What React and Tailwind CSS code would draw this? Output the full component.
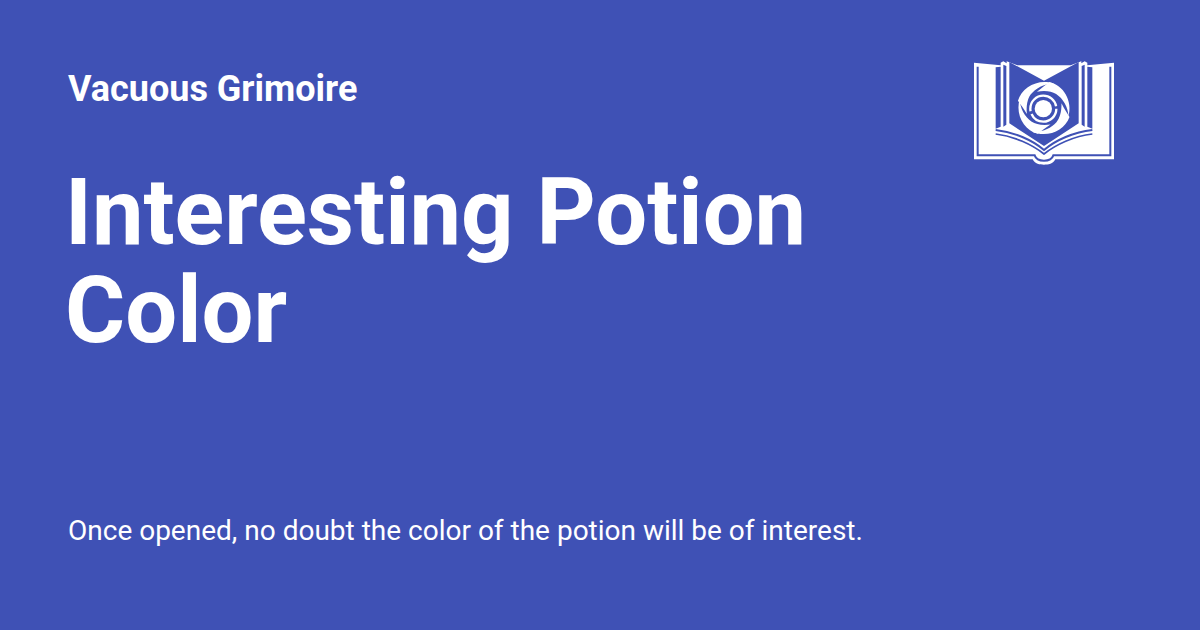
const blue = '#3f51b5'

// one swirl arm, drawn round the origin and turned into place
const Blade = ({ angle, scale = 1 }) => (
  <path
    fill="#fff"
    transform={`translate(240 168) rotate(${angle}) scale(${scale})`}
    d="M-4 -88 C44 -90 88 -46 86 8 C78 -22 54 -46 28 -55 C10 -60 -10 -58 -36 -47 C-22 -62 -14 -76 -4 -88 Z"
  />
)

const Logo = () => (
  <svg viewBox="0 0 480 360" className="w-[160px] h-[120px]">
    {/* book silhouette */}
    <path fill="#fff" d="M30 32 L110 40 L110 32 L118 28 L128 34 L128 28 L160 40 L320 40 L352 28 L352 34 L362 28 L370 32 L370 40 L450 32 L450 322 L274 322 C268 336 252 338 240 338 C228 338 212 336 206 322 L30 322 Z" />
    {/* inset line round the pages */}
    <path fill="none" stroke={blue} strokeWidth="6" d="M41 44 L41 310 L212 310 C216 322 230 326 240 326 C250 326 264 322 268 310 L439 310 L439 44" />
    {/* inner page strips */}
    <path fill={blue} d="M95 46 L110 44 L110 224 L95 230 Z M370 44 L385 46 L385 230 L370 224 Z" />
    <path fill={blue} d="M118 38 L127 42 L127 218 L118 224 Z M353 42 L362 38 L362 224 L353 218 Z" />
    {/* open centre of the book */}
    <path fill={blue} d="M136 30 L240 86 L344 30 L344 214 L240 282 L136 214 Z" />
    <path fill="none" stroke={blue} strokeWidth="6" d="M95 234 C150 240 205 264 240 294 C275 264 330 240 385 234" />
    <path fill="none" stroke={blue} strokeWidth="5" d="M95 246 C150 252 205 278 240 306 C275 278 330 252 385 246" />
    {/* swirl */}
    <circle cx="238" cy="170" r="26" fill="#fff" />
    <circle cx="238" cy="170" r="39" fill="none" stroke="#fff" strokeWidth="7" strokeDasharray="105 9 122 9" />
    <Blade angle={-72} scale={0.92} />
    <Blade angle={14} scale={0.9} />
    <Blade angle={112} scale={0.92} />
    <Blade angle={196} scale={0.9} />
  </svg>
)

export default function App() {
  return (
    <div className="w-[1200px] h-[630px] bg-[#3f51b5] text-white flex flex-col pl-[68px] pr-[76px] font-['Roboto',sans-serif] overflow-hidden">
      <div className="flex justify-between items-start">
        <div className="pt-[68px]">
          <div className="text-[36px] leading-[42px] font-bold">Vacuous Grimoire</div>
          <h1 className="mt-[54px] w-[800px] text-[92px] leading-[98px] font-bold -ml-[3px]">Interesting Potion Color</h1>
        </div>
        <div className="pt-[52px]">
          <Logo />
        </div>
      </div>
      <div className="mt-auto pb-[82px] text-[28px] leading-[34px]">Once opened, no doubt the color of the potion will be of interest.</div>
    </div>
  )
}
